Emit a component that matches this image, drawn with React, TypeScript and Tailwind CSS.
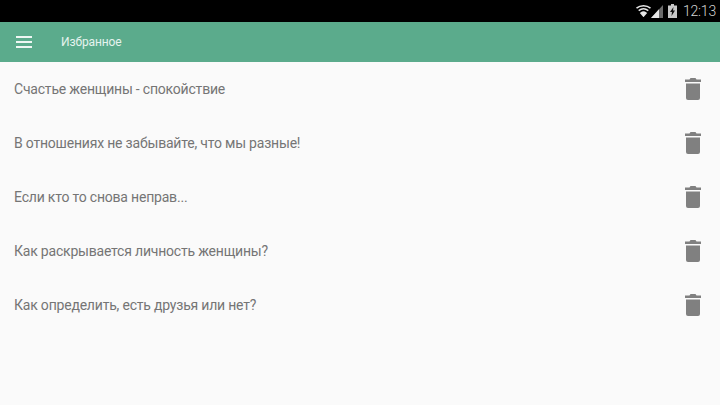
import type { FC } from "react";

const items = [
  "Счастье женщины - спокойствие",
  "В отношениях не забывайте, что мы разные!",
  "Если кто то снова неправ...",
  "Как раскрывается личность женщины?",
  "Как определить, есть друзья или нет?",
];

const TrashIcon: FC = () => (
  <svg width="16" height="22" viewBox="0 0 16 22" fill="#808080">
    <path d="M5.5 0h5l1 1.500H16v2.500H0V1.500h4.500z" />
    <path d="M1 5.500h14V20a2 2 0 0 1-2 2H3a2 2 0 0 1-2-2z" />
  </svg>
);

const StatusBar: FC = () => (
  <div className="h-[22px] bg-black flex items-center justify-end pr-[4px]">
    {/* wifi */}
    <svg width="15" height="12" viewBox="0 0 15 12" fill="none" stroke="#e8e8e8" strokeWidth="1.600">
      <path d="M0.500 3.200C4.500 0 10.500 0 14.500 3.200" />
      <path d="M2.700 5.600C5.500 3.500 9.500 3.500 12.300 5.600" />
      <path d="M5 8.100C6.500 7 8.500 7 10 8.100L7.500 11z" fill="#e8e8e8" />
    </svg>
    {/* signal */}
    <svg width="12" height="13" viewBox="0 0 12 13">
      <path d="M12 0v13H0z" fill="#6b6b6b" />
      <path d="M8 4.300V13H0z" fill="#e8e8e8" />
    </svg>
    {/* battery */}
    <svg width="9" height="14" viewBox="0 0 9 14" className="ml-[5px]">
      <path d="M3 0h3v1.500h3V14H0V1.500h3z" fill="#c8c8c8" />
      <path d="M5.500 3L2 8h2L3.500 12 7 6.500H5z" fill="#111111" />
    </svg>
    <span className="ml-[6px] text-[14px] text-[#d6d6d6] font-['Roboto',sans-serif] font-light tracking-[-0.2px]">12:13</span>
  </div>
);

const App: FC = () => {
  return (
    <div className="w-[720px] h-[405px] overflow-hidden flex flex-col bg-[#fafafa] font-['Roboto',sans-serif]">
      <StatusBar />

      <header className="h-[40px] bg-[#5bab8c] flex items-center pl-[16px]">
        <div className="w-[16px] flex flex-col gap-[3px]">
          <div className="h-[2px] bg-[#eef7f3]" />
          <div className="h-[2px] bg-[#eef7f3]" />
          <div className="h-[2px] bg-[#eef7f3]" />
        </div>
        <h1 className="ml-[29px] text-[12px] text-[#e6f3ee] tracking-[-0.1px]">Избранное</h1>
      </header>

      <ul>
        {items.map((item) => (
          <li key={item} className="h-[54px] flex items-center justify-between pl-[14px] pr-[19px]">
            <span className="text-[14px] text-[#757575] tracking-[-0.2px]">{item}</span>
            <TrashIcon />
          </li>
        ))}
      </ul>
    </div>
  );
};

export default App;
